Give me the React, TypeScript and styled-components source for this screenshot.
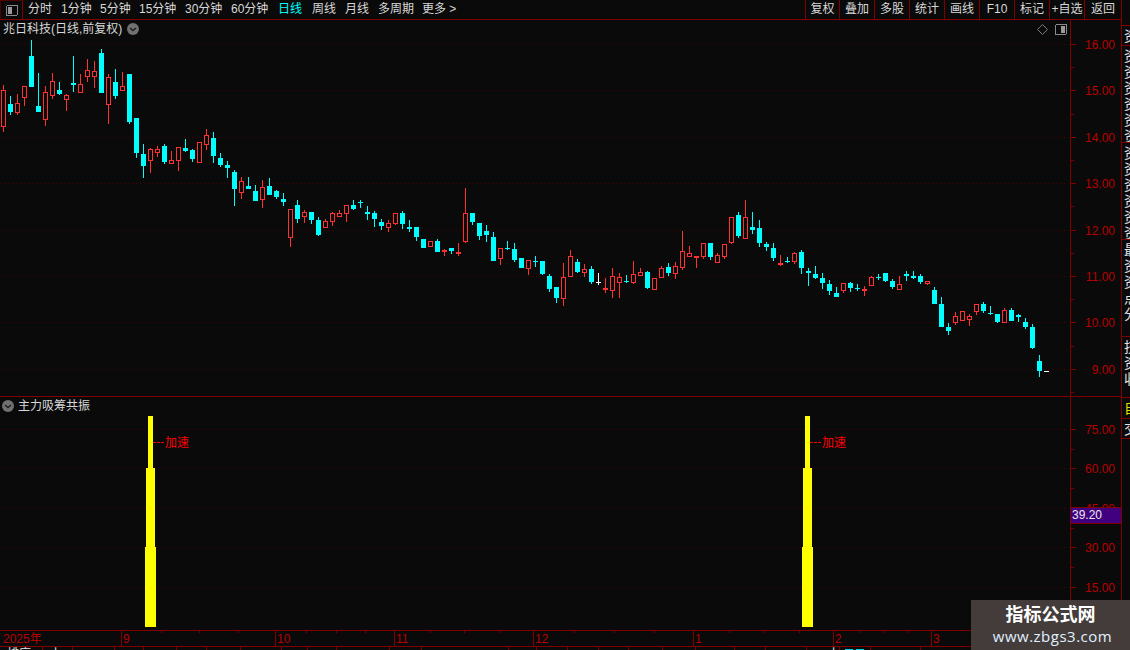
import React from "react";
import styled, { createGlobalStyle } from "styled-components";

const RED_LINE = "#800000";
const AXIS_TEXT = "#b80000";
const GRID = "#500000";
const FONT = `"Liberation Sans", "Noto Sans CJK SC", sans-serif`;

const Global = createGlobalStyle`
  html, body { margin: 0; padding: 0; background: #0a0a0a; }
  #root { width: 1130px; height: 650px; }
`;

const Page = styled.div`
  position: relative;
  width: 1130px;
  height: 650px;
  display: flex;
  overflow: hidden;
  background: #0a0a0a;
  font-family: ${FONT};
  font-size: 12px;
  color: #d8d8d8;
`;

const Workspace = styled.div`
  width: 1121px;
  display: flex;
  flex-direction: column;
`;

const Toolbar = styled.div`
  height: 19px;
  flex: none;
  display: flex;
  align-items: stretch;
  border-bottom: 1px solid ${RED_LINE};
`;

const LayoutButton = styled.div`
  width: 23px;
  box-sizing: border-box;
  display: flex;
  align-items: center;
  justify-content: center;
  border-left: 1px solid #500000;
  border-right: 1px solid ${RED_LINE};
  border-top: 1px solid #500000;
`;

const PeriodTabs = styled.div`
  display: flex;
  align-items: center;
  margin-left: 5px;
`;

const PeriodTab = styled.span<{ $active?: boolean; $w: number }>`
  width: ${(p) => p.$w}px;
  line-height: 19px;
  white-space: nowrap;
  color: ${(p) => (p.$active ? "#00ffff" : "#d8d8d8")};
`;

const ActionGroup = styled.div`
  margin-left: auto;
  display: flex;
`;

const ActionButton = styled.div<{ $w: number }>`
  width: ${(p) => p.$w}px;
  box-sizing: border-box;
  border-left: 1px solid ${RED_LINE};
  text-align: center;
  line-height: 18px;
  white-space: nowrap;
`;

const PanelRow = styled.div<{ $h: number }>`
  height: ${(p) => p.$h}px;
  flex: none;
  box-sizing: border-box;
  display: flex;
  border-bottom: 1px solid ${RED_LINE};
`;

const Plot = styled.div`
  position: relative;
  width: 1070px;
  overflow: hidden;
`;

const ChartSvg = styled.svg`
  display: block;
  shape-rendering: crispEdges;
`;

const PanelTitle = styled.div<{ $left: number; $gap: number }>`
  position: absolute;
  top: 1px;
  left: ${(p) => p.$left}px;
  display: flex;
  align-items: center;
  gap: ${(p) => p.$gap}px;
  line-height: 16px;
  white-space: nowrap;
`;

const PanelCorner = styled.div`
  position: absolute;
  top: 4px;
  right: 3px;
  display: flex;
  align-items: center;
  gap: 7px;
`;

const Axis = styled.div`
  position: relative;
  width: 51px;
  box-sizing: border-box;
  border-left: 1px solid ${RED_LINE};
`;

const AxisTick = styled.div<{ $major?: boolean }>`
  position: absolute;
  left: 0;
  height: 1px;
  width: ${(p) => (p.$major ? 5 : 3)}px;
  background: ${RED_LINE};
`;

const AxisLabel = styled.div`
  position: absolute;
  right: 6px;
  line-height: 14px;
  transform: translateY(-6px);
  color: ${AXIS_TEXT};
`;

const LastValue = styled.div`
  position: absolute;
  left: 0;
  right: 0;
  top: 110px;
  height: 17px;
  box-sizing: border-box;
  padding-left: 1px;
  background: #400080;
  border-top: 1px solid ${RED_LINE};
  border-bottom: 1px solid ${RED_LINE};
  line-height: 15px;
  color: #e8e8e8;
`;

const TimeAxis = styled.div`
  height: 16px;
  flex: none;
  box-sizing: border-box;
  display: flex;
  border-bottom: 1px solid ${RED_LINE};
`;

const MonthCell = styled.div<{ $w: number; $first?: boolean }>`
  position: relative;
  width: ${(p) => p.$w}px;
  box-sizing: border-box;
  padding-left: ${(p) => (p.$first ? 3 : 1)}px;
  border-left: ${(p) => (p.$first ? "none" : `1px solid ${RED_LINE}`)};
  line-height: 16px;
  color: ${AXIS_TEXT};
  white-space: nowrap;
`;

const MonthTick = styled.i`
  position: absolute;
  top: 0;
  width: 1px;
  height: 2px;
  background: ${RED_LINE};
`;

const Footer = styled.div`
  height: 4px;
  flex: none;
  display: flex;
  overflow: hidden;
`;

const FooterCell = styled.div<{ $w: number; $pad: number }>`
  width: ${(p) => p.$w}px;
  flex: none;
  box-sizing: border-box;
  border-right: 1px solid ${RED_LINE};
  padding-left: ${(p) => p.$pad}px;
  line-height: 15px;
  white-space: nowrap;
  color: #e8e8e8;
`;

const FooterFlag = styled.i`
  display: inline-block;
  width: 8px;
  height: 3px;
  margin: 2px 3px 0 0;
  vertical-align: top;
  background: #00d8e8;
`;

const SideStrip = styled.div`
  width: 9px;
  flex: none;
  box-sizing: border-box;
  padding-top: 25px;
  border-left: 1px solid ${RED_LINE};
  overflow: hidden;
`;

const SideTab = styled.div<{ $h: number; $gold?: boolean }>`
  height: ${(p) => p.$h}px;
  box-sizing: border-box;
  overflow: hidden;
  border-top: 1px solid ${RED_LINE};
  padding-left: 2px;
  width: 22px;
  font-size: 14px;
  line-height: 16px;
  color: ${(p) => (p.$gold ? "#e0e000" : "#e4e4e4")};
  word-break: break-all;
  & > span {
    display: block;
    width: 14px;
    margin-top: 2px;
  }
`;

const Watermark = styled.div`
  position: absolute;
  left: 971px;
  top: 600px;
  width: 159px;
  height: 50px;
  display: flex;
  flex-direction: column;
  align-items: center;
  background: #433c3b;
`;

const WatermarkTitle = styled.div`
  margin-top: 5px;
  font-size: 18px;
  line-height: 21px;
  font-weight: 700;
  color: #ffffff;
`;

const WatermarkUrl = styled.div`
  padding-left: 4px;
  font-family: "Open Sans", sans-serif;
  font-size: 15px;
  line-height: 20px;
  letter-spacing: 0.5px;
  color: #e0f0ff;
`;

type K = "r" | "c" | "w";
type Candle = [K, number, number, number, number];

const CANDLES: Candle[] = [
  ["r",85,90,127,132],["c",96,104,112,115],["r",94,103,113,115],["r",86,86,98,106],["c",40,56,87,87],
  ["c",73,106,112,112],["r",86,92,120,126],["r",73,81,96,99],["c",82,90,94,95],["r",94,95,100,111],
  ["c",56,83,85,92],["r",74,84,93,93],["r",59,70,77,82],["r",61,71,77,88],["c",49,53,93,93],
  ["r",74,77,105,124],["c",69,82,96,99],["r",72,86,91,91],["c",74,74,122,124],["c",118,118,153,158],
  ["c",144,154,166,178],["r",148,149,161,173],["r",146,149,153,157],["c",144,146,162,164],["r",151,160,164,164],
  ["r",147,147,161,171],["c",139,148,151,152],["c",149,150,159,162],["r",142,142,163,163],["r",129,135,145,150],
  ["c",132,138,156,163],["c",153,158,165,167],["c",161,165,168,178],["c",170,172,189,206],["r",177,181,193,199],
  ["c",177,186,189,189],["c",185,191,201,201],["r",180,187,200,208],["c",178,186,195,195],["c",190,191,197,199],
  ["c",193,199,202,206],["r",209,209,238,247],["c",200,205,219,223],["r",210,212,217,223],["c",212,212,220,224],
  ["c",217,220,235,236],["r",219,221,228,228],["r",212,213,222,226],["r",210,213,217,217],["r",205,205,214,222],
  ["c",200,205,209,210],["c",200,202,203,208],["c",206,212,214,220],["c",211,213,219,227],["c",219,222,226,230],
  ["r",220,223,228,232],["r",213,213,224,225],["c",211,213,224,229],["c",220,227,229,232],["c",227,227,237,241],
  ["c",239,239,248,248],["r",241,241,247,247],["c",239,241,252,252],["r",249,250,252,256],["c",248,248,251,254],
  ["r",243,252,254,256],["r",188,213,242,243],["c",213,213,222,225],["c",223,223,236,240],["c",225,231,235,242],
  ["c",232,237,261,261],["r",248,248,259,265],["c",241,248,249,250],["c",243,249,260,262],["c",258,258,268,268],
  ["r",260,260,269,275],["c",256,261,262,267],["c",261,261,274,275],["c",274,276,289,292],["c",287,287,298,303],
  ["r",263,277,299,306],["r",250,256,277,277],["c",259,262,272,273],["r",264,269,273,277],["c",266,269,282,284],
  ["w",273,282,283,285],["r",278,288,290,293],["r",268,276,291,298],["r",273,277,283,298],["c",275,281,282,283],
  ["r",261,274,283,284],["r",268,272,276,276],["c",271,272,288,289],["r",278,278,290,290],["r",266,268,278,278],
  ["c",263,267,273,276],["r",262,266,274,279],["r",231,251,268,270],["r",246,253,257,257],["r",256,256,258,268],
  ["r",243,243,257,259],["c",243,243,257,260],["r",253,255,263,263],["r",244,244,257,259],["r",217,217,243,244],
  ["c",212,215,236,238],["r",200,217,239,239],["c",212,227,230,234],["c",220,228,243,247],["c",242,244,247,251],
  ["c",243,248,258,261],["r",255,263,265,266],["c",257,261,262,263],["r",252,253,262,264],["c",250,252,268,274],
  ["c",268,271,273,286],["c",266,274,278,279],["c",273,278,283,289],["c",280,284,291,295],["c",287,293,297,297],
  ["r",283,283,291,293],["c",282,283,288,292],["c",284,288,289,291],["r",286,289,291,296],["r",276,277,286,286],
  ["c",274,277,278,280],["c",273,273,281,282],["c",279,281,287,289],["r",276,284,290,290],["c",271,274,276,281],
  ["c",271,276,278,279],["c",274,276,282,284],["r",281,281,284,285],["c",287,290,304,304],["c",297,304,327,327],
  ["c",323,327,331,335],["r",312,316,323,325],["r",311,311,321,321],["r",314,316,320,326],["r",304,304,312,315],
  ["c",302,304,311,313],["c",306,313,314,315],["c",314,314,322,323],["r",308,310,323,323],["c",308,310,321,321],
  ["c",314,315,317,322],["c",318,322,327,329],["c",324,327,348,349],["c",355,361,371,377],["w",371,371,372,372],
];

const COLORS: Record<K, string> = { r: "#ff3232", c: "#00ffff", w: "#ffffff" };

function CandleMark({ c, i }: { c: Candle; i: number }) {
  const [k, high, top, bottom, low] = c;
  const left = 1 + 7 * i;
  const mid = left + 2;
  const color = COLORS[k];
  const h = bottom - top;
  const hollow = k === "r" && h >= 3;
  return (
    <g>
      {top > high && <rect x={mid} y={high} width={1} height={top - high} fill={color} />}
      {low > bottom && <rect x={mid} y={bottom} width={1} height={low - bottom} fill={color} />}
      {hollow ? (
        <rect x={left + 0.5} y={top + 0.5} width={4} height={h - 1} fill="#0a0a0a" stroke={color} />
      ) : (
        <rect x={left} y={top} width={5} height={Math.max(h, 1)} fill={color} />
      )}
    </g>
  );
}

function Chevron() {
  return (
    <svg width="12" height="12" viewBox="0 0 12 12">
      <circle cx="6" cy="6" r="6" fill="#707070" />
      <path d="M3 5l3 2.6L9 5" fill="none" stroke="#1c1c1c" strokeWidth="1.3" />
    </svg>
  );
}

function LayoutIcon({ side }: { side: "left" | "right" }) {
  return (
    <svg width="12" height="11" viewBox="0 0 12 11" shapeRendering="crispEdges">
      <rect x="0.5" y="0.5" width="11" height="10" rx="1.5" fill="#0a0a0a" stroke="#8a8a8a" />
      <rect x={side === "left" ? 2 : 6} y="2" width="4" height="7" fill="#9a9a9a" />
    </svg>
  );
}

function Diamond() {
  return (
    <svg width="11" height="11" viewBox="0 0 11 11">
      <path d="M5.5 .5l5 5-5 5-5-5z" fill="none" stroke="#7c7c7c" />
    </svg>
  );
}

const PRICE_MAJOR = [
  [16, 44], [15, 90], [14, 137], [13, 183], [12, 230], [11, 276], [10, 322], [9, 369],
];
const PRICE_MINOR = [67, 114, 160, 206, 253, 299, 346, 392];
const IND_MAJOR = [
  [75, 429], [60, 468], [45, 508], [30, 547], [15, 587],
];
const IND_MINOR = [449, 488, 528, 567];

const PERIODS: [string, number][] = [
  ["分时", 33], ["1分钟", 39], ["5分钟", 39], ["15分钟", 46], ["30分钟", 46], ["60分钟", 47],
  ["日线", 34], ["周线", 33], ["月线", 33], ["多周期", 44], ["更多 >", 40],
];
const ACTIONS: [string, number][] = [
  ["复权", 34], ["叠加", 35], ["多股", 35], ["统计", 35], ["画线", 35], ["F10", 35], ["标记", 35], ["+自选", 35], ["返回", 37],
];

const MONTHS: { label: string; w: number; ticks: number[] }[] = [
  { label: "2025年", w: 121, ticks: [] },
  { label: "9", w: 154, ticks: [39, 77, 116] },
  { label: "10", w: 119, ticks: [30, 60, 89] },
  { label: "11", w: 139, ticks: [35, 69, 104] },
  { label: "12", w: 160, ticks: [40, 80, 120] },
  { label: "1", w: 140, ticks: [35, 70, 105] },
  { label: "2", w: 98, ticks: [25, 49, 74] },
  { label: "3", w: 190, ticks: [] },
];

const FOOTER = [43, 30, 42, 29, 33, 30, 34, 41, 26, 29, 53, 32, 87, 28, 31, 31, 30, 34, 33, 39, 31, 41, 33, 31, 50];

function Bar({ cx }: { cx: number }) {
  return (
    <g fill="#ffff00">
      <rect x={cx - 2} y={416} width={5} height={52} />
      <rect x={cx - 4} y={468} width={9} height={79} />
      <rect x={cx - 5} y={547} width={11} height={80} />
    </g>
  );
}

function SpeedNote({ x }: { x: number }) {
  return (
    <g>
      <line x1={x} x2={x + 12} y1={442.5} y2={442.5} stroke="#ff0000" strokeDasharray="3 1" />
      <text x={x + 12} y={447} fill="#ff0000" fontSize="12" fontFamily={FONT}>加速</text>
    </g>
  );
}

export default function App() {
  return (
    <Page>
      <Global />
      <Workspace>
        <Toolbar>
          <LayoutButton><LayoutIcon side="left" /></LayoutButton>
          <PeriodTabs>
            {PERIODS.map(([p, w]) => (
              <PeriodTab key={p} $w={w} $active={p === "日线"}>{p}</PeriodTab>
            ))}
          </PeriodTabs>
          <ActionGroup>
            {ACTIONS.map(([a, w]) => (
              <ActionButton key={a} $w={w}>{a}</ActionButton>
            ))}
          </ActionGroup>
        </Toolbar>

        <PanelRow $h={377}>
          <Plot>
            <ChartSvg width="1070" height="376" viewBox="0 20 1070 376">
              {PRICE_MAJOR.map(([, y]) => (
                <line key={y} x1={0} x2={1068} y1={y + 0.5} y2={y + 0.5} stroke={GRID} strokeDasharray="1 3" />
              ))}
              {CANDLES.map((c, i) => (
                <CandleMark key={i} c={c} i={i} />
              ))}
            </ChartSvg>
            <PanelTitle $left={3} $gap={5}>
              <span>兆日科技(日线,前复权)</span>
              <Chevron />
            </PanelTitle>
            <PanelCorner>
              <Diamond />
              <LayoutIcon side="right" />
            </PanelCorner>
          </Plot>
          <Axis>
            {PRICE_MAJOR.map(([v, y]) => (
              <React.Fragment key={v}>
                <AxisTick $major style={{ top: y - 20 }} />
                <AxisLabel style={{ top: y - 20 }}>{v.toFixed(2)}</AxisLabel>
              </React.Fragment>
            ))}
            {PRICE_MINOR.map((y) => (
              <AxisTick key={y} style={{ top: y - 20 }} />
            ))}
          </Axis>
        </PanelRow>

        <PanelRow $h={234}>
          <Plot>
            <ChartSvg width="1070" height="233" viewBox="0 397 1070 233">
              {IND_MAJOR.map(([, y]) => (
                <line key={y} x1={0} x2={1068} y1={y + 0.5} y2={y + 0.5} stroke={GRID} strokeDasharray="1 3" />
              ))}
              <Bar cx={150} />
              <Bar cx={807} />
              <SpeedNote x={153} />
              <SpeedNote x={810} />
            </ChartSvg>
            <PanelTitle $left={2} $gap={4}>
              <Chevron />
              <span>主力吸筹共振</span>
            </PanelTitle>
          </Plot>
          <Axis>
            {IND_MAJOR.map(([v, y]) => (
              <React.Fragment key={v}>
                <AxisTick $major style={{ top: y - 397 }} />
                <AxisLabel style={{ top: y - 397 }}>{v.toFixed(2)}</AxisLabel>
              </React.Fragment>
            ))}
            {IND_MINOR.map((y) => (
              <AxisTick key={y} style={{ top: y - 397 }} />
            ))}
            <LastValue>39.20</LastValue>
          </Axis>
        </PanelRow>

        <TimeAxis>
          {MONTHS.map((m, i) => (
            <MonthCell key={m.label} $w={m.w} $first={i === 0}>
              {m.label}
              {m.ticks.map((t) => (
                <MonthTick key={t} style={{ left: t }} />
              ))}
            </MonthCell>
          ))}
        </TimeAxis>

        <Footer>
          {FOOTER.map((w, i) => (
            <FooterCell key={i} $w={w} $pad={i === 22 ? 21 : i === 23 ? 5 : 7}>
              {i === 0 && "排序"}
              {i === 1 && "上"}
              {i === 22 && "上"}
              {i === 23 && (
                <>
                  <FooterFlag /><FooterFlag />
                </>
              )}
            </FooterCell>
          ))}
        </Footer>
      </Workspace>

      <SideStrip>
        <SideTab $h={20}><span>资</span></SideTab>
        <SideTab $h={97}><span>资资资资资资</span></SideTab>
        <SideTab $h={97}><span>资资资资资资</span></SideTab>
        <SideTab $h={97}><span>最资资点分</span></SideTab>
        <SideTab $h={61}><span>技资收</span></SideTab>
        <SideTab $h={21} $gold><span>自</span></SideTab>
        <SideTab $h={20}><span>交</span></SideTab>
        <SideTab $h={1} />
      </SideStrip>

      <Watermark>
        <WatermarkTitle>指标公式网</WatermarkTitle>
        <WatermarkUrl>www.zbgs3.com</WatermarkUrl>
      </Watermark>
    </Page>
  );
}
